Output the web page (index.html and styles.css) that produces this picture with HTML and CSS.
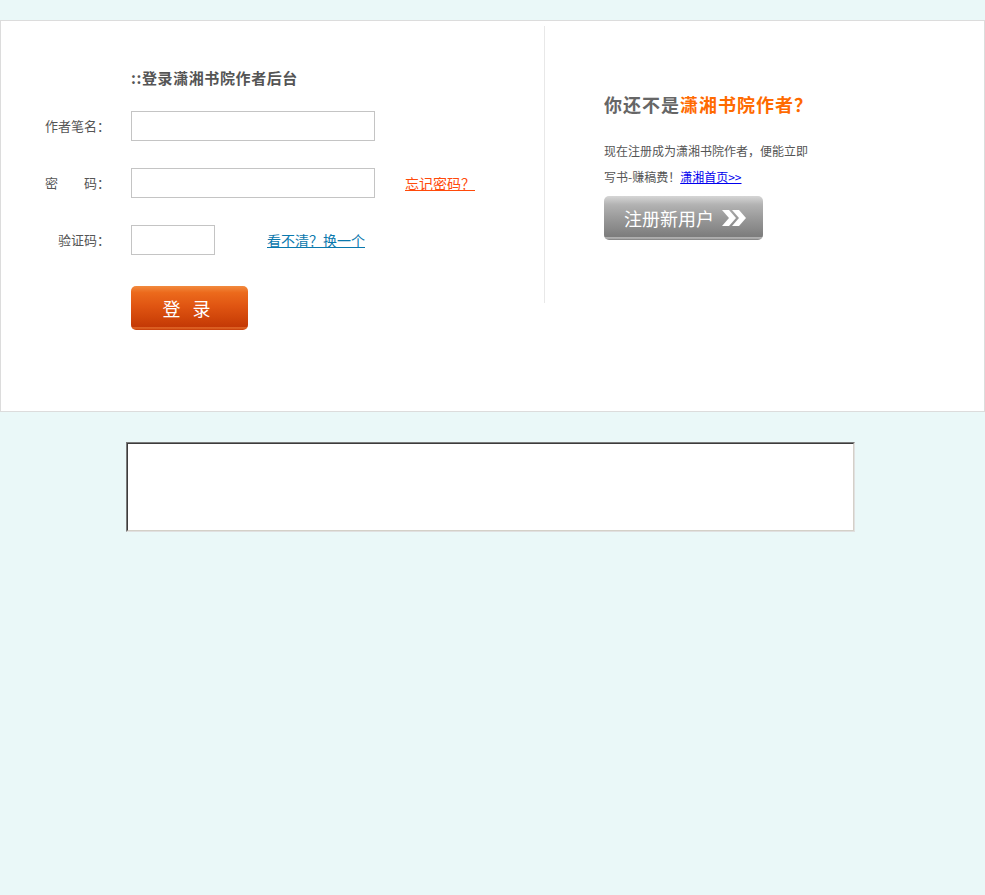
FILE: index.html
```html
<!DOCTYPE html>
<html lang="zh-CN">
<head>
<meta charset="utf-8">
<title>登录潇湘书院作者后台</title>
<link rel="stylesheet" href="styles.css">
</head>
<body>
<div class="panel">
  <div class="login">
    <div class="title">::登录潇湘书院作者后台</div>
    <div class="row">
      <label class="label">作者笔名：</label>
      <input class="field wide" type="text">
    </div>
    <div class="row">
      <label class="label">密　　码：</label>
      <input class="field wide" type="password">
      <a class="forgot" href="#">忘记密码？</a>
    </div>
    <div class="row">
      <label class="label">验证码：</label>
      <input class="field short" type="text">
      <a class="refresh" href="#">看不清？换一个</a>
    </div>
    <div class="row btnrow">
      <span class="label"></span>
      <button class="btn-login" type="button">登 录</button>
    </div>
  </div>
  <div class="join">
    <div class="join-title">你还不是<span class="hl">潇湘书院作者？</span></div>
    <p class="join-text">现在注册成为潇湘书院作者，便能立即<br>写书-赚稿费！<a class="home" href="#">潇湘首页&gt;&gt;</a></p>
    <button class="btn-reg" type="button">注册新用户<svg class="chev" width="26" height="18" viewBox="0 0 26 18"><path d="M1 1 L8 1 L15 9 L8 17 L1 17 L8 9 Z" fill="#fff"/><path d="M11 1 L18 1 L25 9 L18 17 L11 17 L18 9 Z" fill="#fff"/></svg></button>
  </div>
</div>
<div class="frame-outer"><div class="frame-inner"></div></div>
</body>
</html>
```
FILE: styles.css
```css
html, body {
  margin: 0;
  padding: 0;
}
body {
  background: #eaf8f8;
  font-family: "Noto Sans CJK SC", "Liberation Sans", sans-serif;
  color: #555;
  font-size: 13px;
}
.panel {
  margin-top: 20px;
  height: 390px;
  background: #fff;
  border: 1px solid #dcdcdc;
  display: flex;
  align-items: flex-start;
}
.login {
  width: 543px;
  padding-top: 47px;
  display: flex;
  flex-direction: column;
}
.title {
  margin-left: 130px;
  font-size: 15px;
  font-weight: bold;
  line-height: 20px;
  letter-spacing: 0.6px;
  color: #555;
  margin-bottom: 23px;
}
.row {
  display: flex;
  align-items: center;
  height: 30px;
  margin-bottom: 27px;
}
.btnrow {
  height: 44px;
  margin-top: 4px;
}
.label {
  width: 109px;
  text-align: right;
  margin-right: 21px;
  font-size: 13px;
  color: #555;
  line-height: 30px;
}
.field {
  box-sizing: border-box;
  height: 30px;
  border: 1px solid #c4c4c4;
  padding: 0 4px;
  margin: 0;
  outline: none;
  background: #fff;
}
.wide { width: 244px; }
.short { width: 84px; }
.forgot {
  margin-left: 30px;
  color: #ff4a0a;
  font-size: 14px;
  text-decoration: underline;
}
.refresh {
  margin-left: 52px;
  color: #0a78ad;
  font-size: 14px;
  text-decoration: underline;
}
.btn-login {
  width: 117px;
  height: 44px;
  border: 0;
  border-radius: 5px;
  background: linear-gradient(#f28a3e 0%, #ec6a1c 15%, #e05512 45%, #cf4409 75%, #c43906 92%, #e26a2a 95%, #c43a06 100%);
  color: #fff;
  font-family: "Noto Sans CJK SC", sans-serif;
  font-size: 18px;
  letter-spacing: 4px;
  padding-left: 4px;
  cursor: pointer;
}
.join {
  margin-top: 5px;
  height: 277px;
  border-left: 1px solid #e8e8e8;
  padding-left: 59px;
  padding-top: 66px;
  box-sizing: border-box;
  flex: 1;
}
.join-title {
  font-size: 18px;
  font-weight: bold;
  line-height: 24px;
  letter-spacing: 1px;
  color: #666;
  margin-bottom: 22px;
}
.hl { color: #ff6a00; }
.join-text {
  margin: 0 0 6px;
  font-size: 12px;
  line-height: 26px;
  color: #555;
}
.home {
  color: #0000ee;
  text-decoration: underline;
}
.btn-reg {
  width: 159px;
  height: 44px;
  border: 0;
  border-radius: 5px;
  background: linear-gradient(#d6d6d6 0%, #b2b2b2 20%, #9a9a9a 50%, #858585 80%, #7c7c7c 92%, #bdbdbd 95%, #7a7a7a 100%);
  color: #fff;
  font-family: "Noto Sans CJK SC", sans-serif;
  font-size: 18px;
  display: flex;
  align-items: center;
  justify-content: center;
  gap: 7px;
  padding: 0 0 0 4px;
  cursor: pointer;
}
.chev { display: block; }
.frame-outer {
  margin: 30px 0 0 126px;
  width: 727px;
  height: 88px;
  border-style: solid;
  border-width: 1px;
  border-color: #7a7a7a #e0e0e0 #e0e0e0 #7a7a7a;
}
.frame-inner {
  height: 86px;
  background: #fff;
  border-style: solid;
  border-width: 1px;
  border-color: #3c3c3c #d4d0c8 #d4d0c8 #3c3c3c;
}
```
